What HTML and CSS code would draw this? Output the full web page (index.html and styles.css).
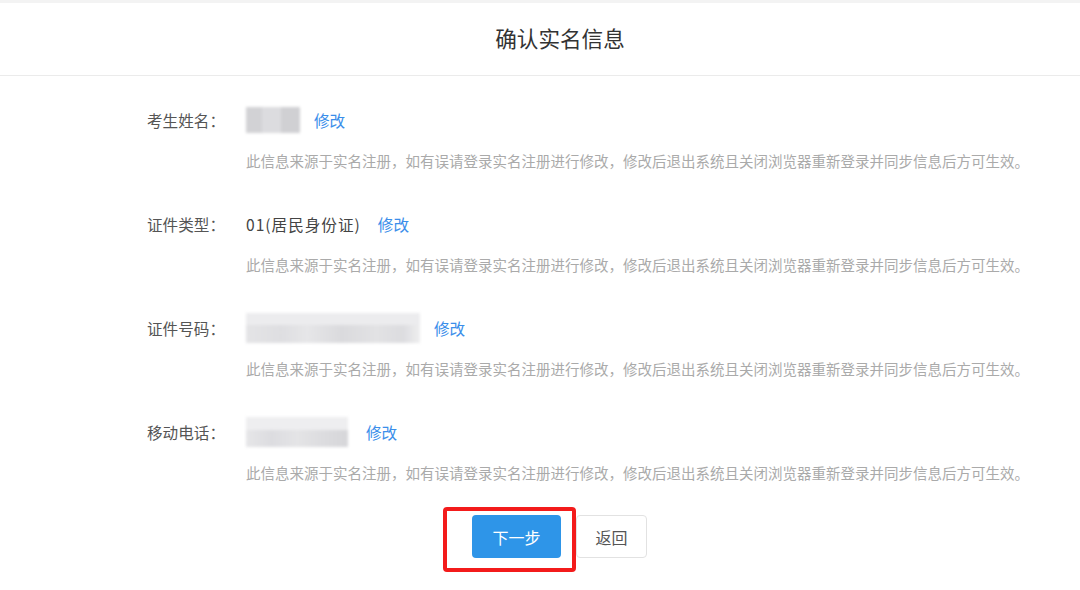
FILE: index.html
```html
<!DOCTYPE html>
<html lang="zh-CN">
<head>
    <meta charset="UTF-8">
    <meta name="viewport" content="width=device-width, initial-scale=1.0">
    <title>确认实名信息</title>
    <link rel="stylesheet" href="styles.css">
</head>
<body>
    <div class="topbar"></div>
    <div class="header">确认实名信息</div>

    <div class="form">
        <div class="field">
            <div class="field-main">
                <span class="field-label">考生姓名：</span>
                <span class="masked masked-name"></span>
                <a class="edit-link" href="javascript:;">修改</a>
            </div>
            <p class="field-tip">此信息来源于实名注册，如有误请登录实名注册进行修改，修改后退出系统且关闭浏览器重新登录并同步信息后方可生效。</p>
        </div>

        <div class="field">
            <div class="field-main">
                <span class="field-label">证件类型：</span>
                <span class="field-value">01(居民身份证)</span>
                <a class="edit-link" href="javascript:;">修改</a>
            </div>
            <p class="field-tip">此信息来源于实名注册，如有误请登录实名注册进行修改，修改后退出系统且关闭浏览器重新登录并同步信息后方可生效。</p>
        </div>

        <div class="field">
            <div class="field-main">
                <span class="field-label">证件号码：</span>
                <span class="masked masked-id"></span>
                <a class="edit-link" href="javascript:;">修改</a>
            </div>
            <p class="field-tip">此信息来源于实名注册，如有误请登录实名注册进行修改，修改后退出系统且关闭浏览器重新登录并同步信息后方可生效。</p>
        </div>

        <div class="field">
            <div class="field-main">
                <span class="field-label">移动电话：</span>
                <span class="masked masked-phone"></span>
                <a class="edit-link" href="javascript:;">修改</a>
            </div>
            <p class="field-tip">此信息来源于实名注册，如有误请登录实名注册进行修改，修改后退出系统且关闭浏览器重新登录并同步信息后方可生效。</p>
        </div>
    </div>

    <div class="actions">
        <div class="highlight">
            <button class="btn btn-primary">下一步</button>
        </div>
        <button class="btn btn-default">返回</button>
    </div>
</body>
</html>
```

FILE: styles.css
```css
* {
    box-sizing: border-box;
    margin: 0;
    padding: 0;
}

body {
    font-family: 'Noto Sans CJK SC', 'Microsoft YaHei', sans-serif;
    background-color: #fff;
    color: #333;
}

.topbar {
    height: 3px;
    background-color: #f3f3f3;
}

.header {
    height: 73px;
    line-height: 70px;
    padding-left: 40px;
    border-bottom: 1px solid #ebebeb;
    text-align: center;
    font-size: 21.6px;
    color: #333;
}

.form {
    padding: 29px 0 0 147px;
}

.field + .field {
    margin-top: 37px;
}

.field-main {
    display: flex;
    align-items: center;
    height: 30px;
    font-size: 15.6px;
}

.field-label {
    width: 99px;
    color: #555;
}

.field-value {
    color: #444;
    letter-spacing: 1px;
    margin-right: 17px;
}

.edit-link {
    color: #3b8eea;
    text-decoration: none;
}

.field-tip {
    margin-top: 15px;
    padding-left: 99px;
    font-size: 14.5px;
    line-height: 22px;
    color: #aaa;
    white-space: nowrap;
}

/* 打码区域 */
.masked {
    height: 26px;
    filter: blur(1.5px);
}

.masked-name {
    width: 54px;
    margin-right: 14px;
    background: linear-gradient(to right, #d2d2d5 0, #d2d2d5 30%, #dcdcdf 30%, #dcdcdf 65%, #d0d0d3 65%);
}

.masked-id {
    width: 174px;
    height: 30px;
    margin-right: 14px;
    background:
        linear-gradient(to bottom, #ececee 0, #ececee 40%, transparent 40%),
        linear-gradient(to right, #e4e4e6 0, #dedee1 20%, #e6e6e8 35%, #dadadd 55%, #e2e2e4 75%, #dcdcdf 90%, #eeeeef 100%);
}

.masked-phone {
    width: 102px;
    height: 30px;
    margin-right: 18px;
    background:
        linear-gradient(to bottom, #eeeef0 0, #eeeef0 45%, transparent 45%),
        linear-gradient(to right, #e6e6e8 0, #dcdce0 25%, #e4e4e6 50%, #dcdcdf 75%, #d6d6d9 100%);
}

.actions {
    display: flex;
    align-items: flex-start;
    padding-left: 443px;
    margin-top: 23px;
}

.highlight {
    border: 4px solid #f31b1b;
    border-radius: 4px;
    padding: 4px 11px 10px 25px;
}

.btn {
    height: 43px;
    border-radius: 4px;
    font-family: inherit;
    font-size: 16px;
    cursor: pointer;
}

.btn-primary {
    width: 89px;
    border: none;
    background-color: #2e95e8;
    color: #fff;
}

.btn-default {
    width: 71px;
    margin-top: 8px;
    border: 1px solid #e2e2e2;
    background-color: #fff;
    color: #555;
}
```
